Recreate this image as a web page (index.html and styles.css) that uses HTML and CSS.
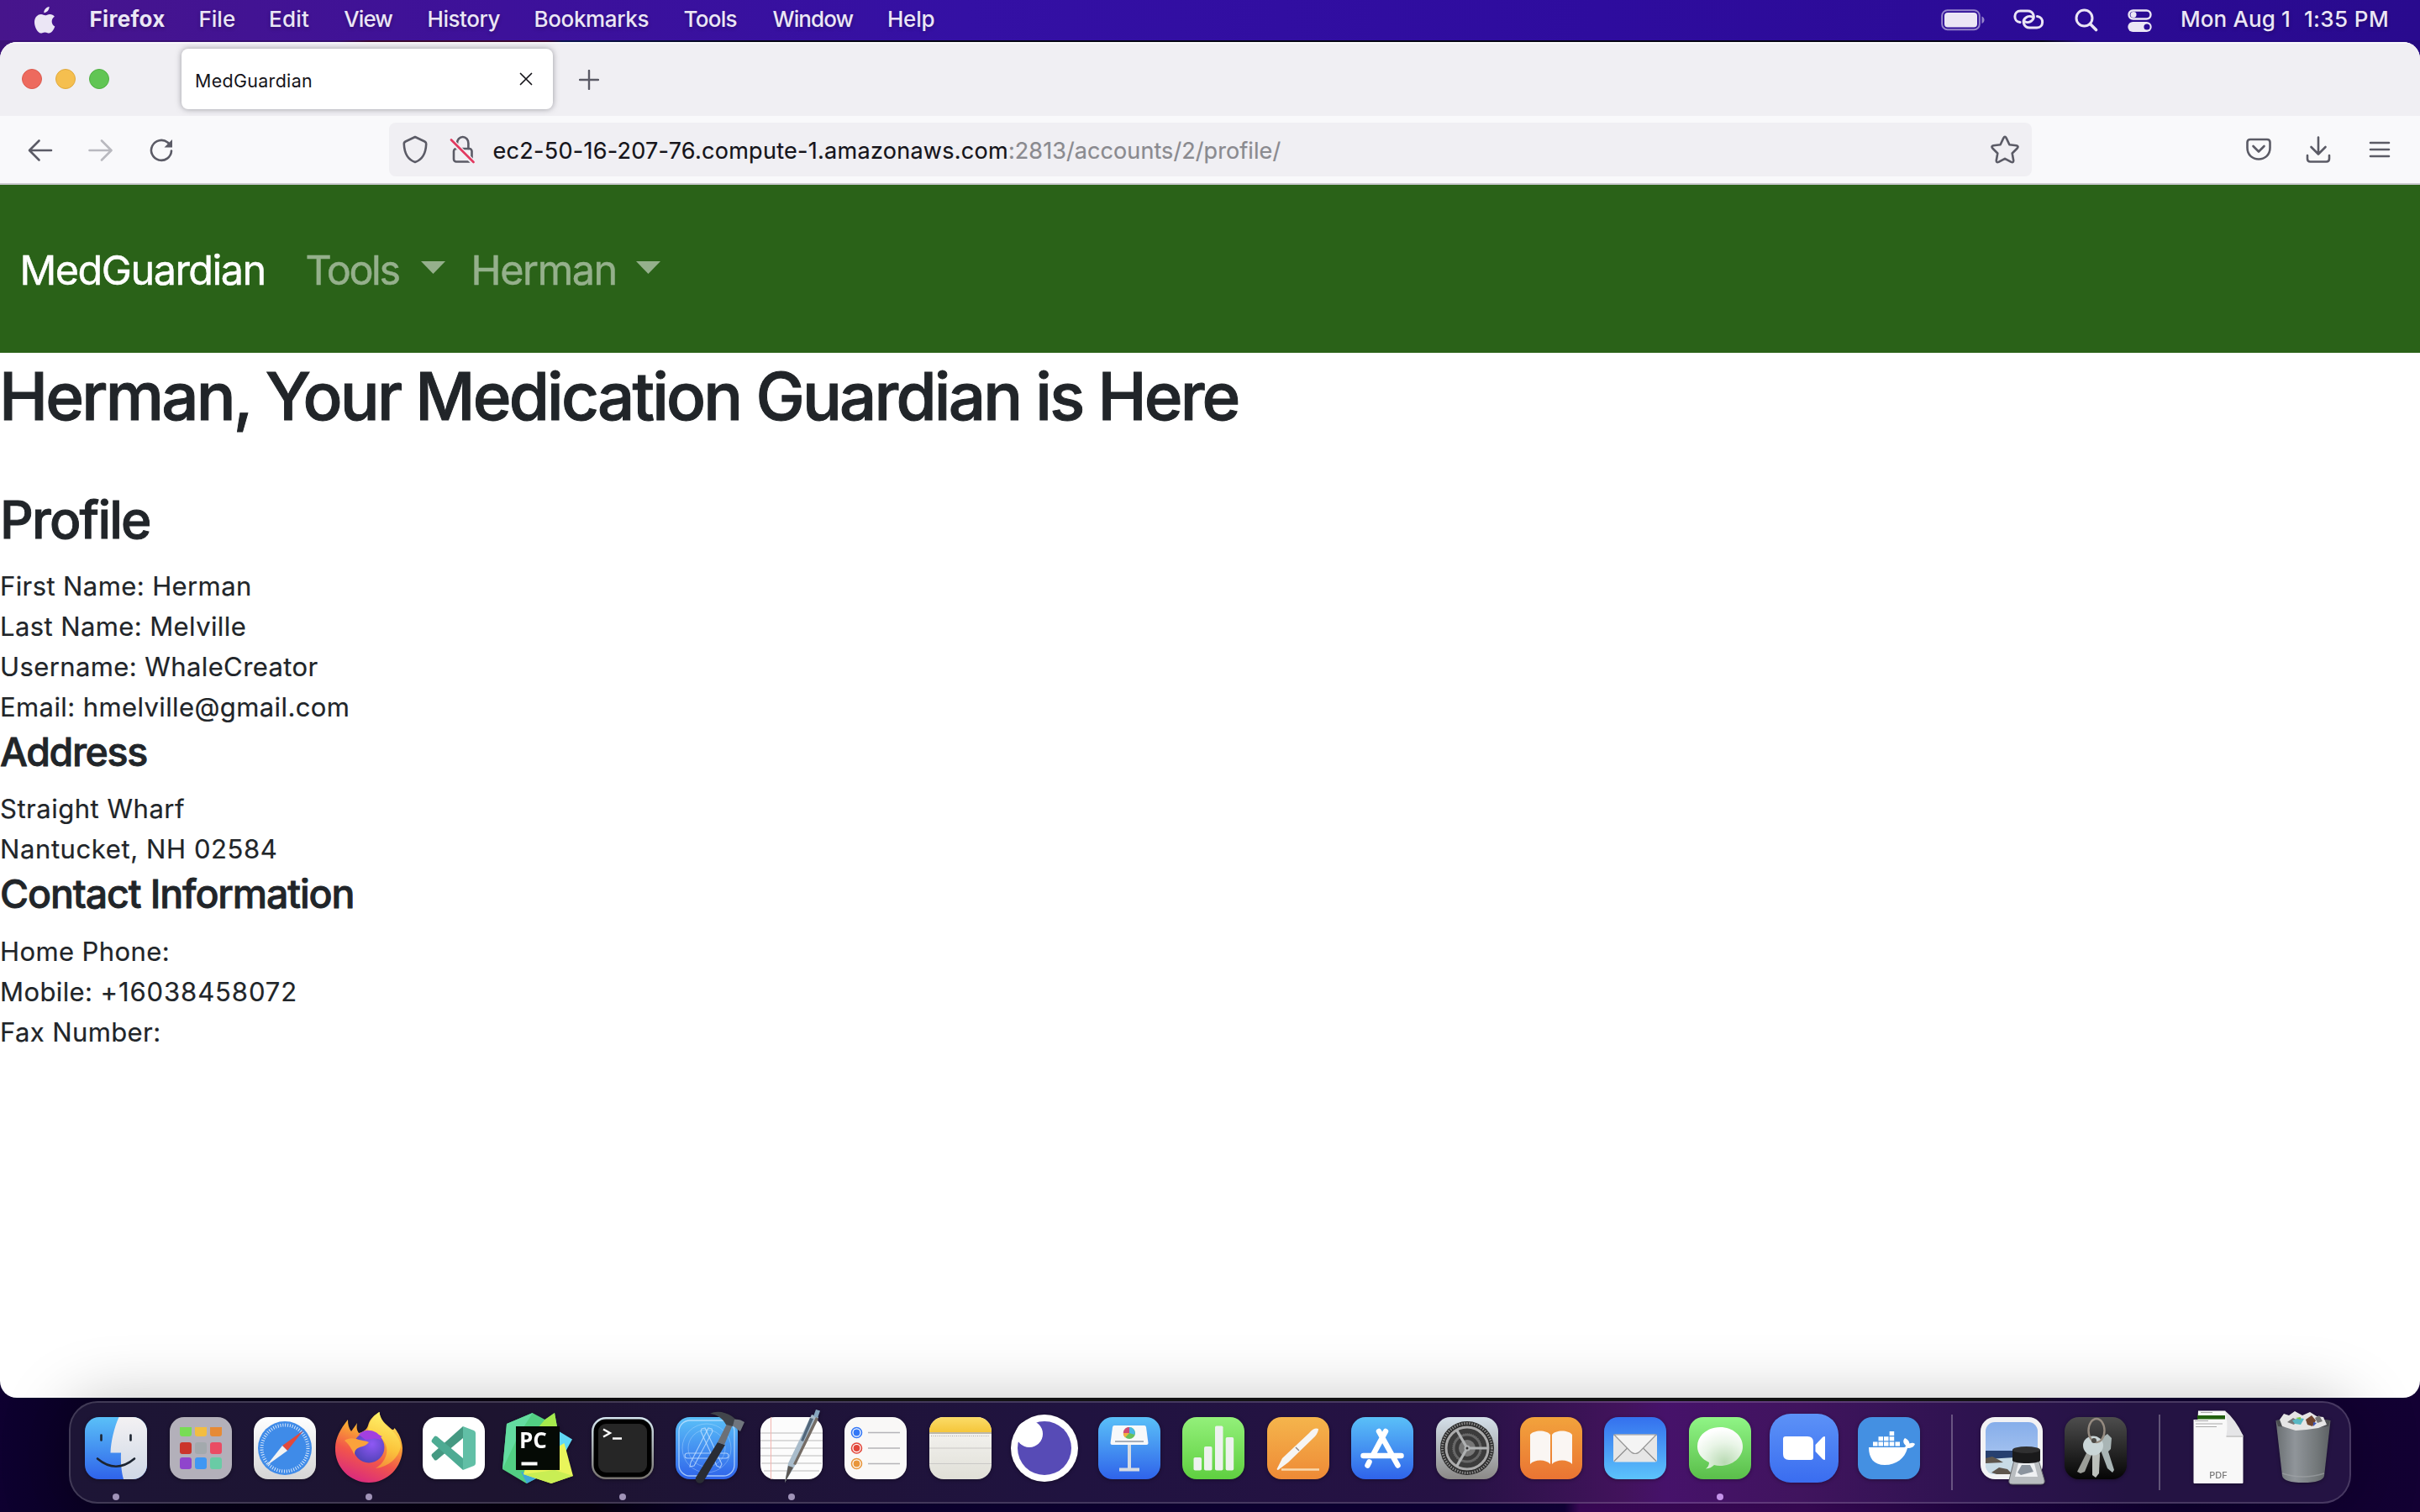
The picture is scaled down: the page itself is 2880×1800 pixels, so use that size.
FILE: index.html
```html
<!DOCTYPE html>
<html lang="en">
<head>
<meta charset="utf-8">
<title>MedGuardian</title>
<link rel="stylesheet" href="styles.css">
</head>
<body>
<div class="desktop">
  <header class="menubar">
    <svg class="apple" viewBox="0 0 26 32"><path d="M18.6 0c.3 3.600-2.900 7.300-6.300 7.200C12 3.800 15.300.3 18.600 0zM25.300 23.600c-1.400 3.900-3.900 7.900-7 8-1.800 0-2.600-1.100-4.800-1.100s-3.100 1.100-4.800 1.100C5.200 31.700 1 24.600 1 18.600c0-6.300 4-9.600 7.900-9.600 2.100 0 3.700 1.300 5 1.300 1.200 0 3.200-1.500 5.700-1.400 2 .1 4 .9 5.300 2.800-4.700 2.900-4 9.500.4 11.900z"/></svg>
    <nav class="menus">
      <span class="app">Firefox</span><span class="m-file">File</span><span class="m-edit">Edit</span><span class="m-view">View</span><span class="m-history">History</span><span class="m-bookmarks">Bookmarks</span><span class="m-tools">Tools</span><span class="m-window">Window</span><span class="m-help">Help</span>
    </nav>
    <div class="status">
      <svg class="battery" viewBox="0 0 52 26"><rect x="1.200" y="1.200" width="44.600" height="23" rx="6.500" fill="none" stroke="#fff" stroke-opacity=".5" stroke-width="2"/><rect x="4" y="4" width="39" height="17.400" rx="4" fill="#ebe6f5"/><path d="M48.500 8.500c4 1.500 4 7 0 8.500z" fill="#fff" fill-opacity=".5"/></svg>
      <svg class="link" viewBox="0 0 37 26" fill="none" stroke="#ebe6f5" stroke-width="3" stroke-linecap="round"><path d="M8 15.500C-.5 14.500 0 2 8.500 2H17c7.500 0 9.500 8.500 4.500 12-2.500 2-6 1.800-8 .5"/><path d="M28.500 8.500C37 9.500 36.500 22 28 22h-8.500c-7.500 0-9.500-8.500-4.500-12 2.500-2 6-1.800 8-.5"/></svg>
      <svg class="search" viewBox="0 0 28 28" fill="none" stroke="#ebe6f5" stroke-width="3" stroke-linecap="round"><circle cx="11.500" cy="11.500" r="9.500"/><path d="M18.500 18.500l7 7" stroke-width="3.600"/></svg>
      <svg class="control" viewBox="0 0 30 28"><rect x="1.500" y="1.500" width="26" height="10" rx="5" fill="none" stroke="#ebe6f5" stroke-width="2.400"/><circle cx="7" cy="6.500" r="3.500" fill="#ebe6f5"/><rect x=".3" y="15" width="28.400" height="12" rx="6" fill="#ebe6f5"/><circle cx="23" cy="21" r="3.600" fill="#2b0a95"/></svg>
      <span class="date">Mon Aug 1</span><span class="time">1:35 PM</span>
    </div>
  </header>

  <main class="window">
    <div class="tabbar">
      <div class="lights"><i class="red"></i><i class="yellow"></i><i class="green"></i></div>
      <div class="tab"><span>MedGuardian</span><svg viewBox="0 0 16 16"><path d="M1.500 1.500l13 13M14.500 1.500l-13 13" stroke="#15141a" stroke-width="1.700" stroke-linecap="round"/></svg></div>
      <svg class="newtab" viewBox="0 0 24 24"><path d="M12 1v22M1 12h22" stroke="#5b5b66" stroke-width="2.400" stroke-linecap="round"/></svg>
    </div>
    <div class="toolbar">
      <div class="nav-buttons">
        <svg viewBox="0 0 30 28"><path d="M28 14H2.500M13.500 2.500L2 14l11.500 11.500"/></svg>
        <svg class="off" viewBox="0 0 30 28"><path d="M1.500 14H27M16 2.500L27.500 14 16 25.500"/></svg>
        <svg class="reload" viewBox="0 0 30 30"><path d="M27 15.500A12 12 0 1 1 22.500 5.500L26 9"/><path d="M28 2v9.500h-9.500z" fill="#5b5b66" stroke="none"/></svg>
      </div>
      <div class="urlbar">
        <svg class="shield" viewBox="0 0 30 34"><path d="M15 2l11.500 5.500c1.500.7 1.800 1.500 1.700 3C27.800 20 24 29 15 32 6 29 2.200 20 1.800 10.500c-.1-1.500.2-2.300 1.700-3z"/></svg>
        <svg class="lock" viewBox="0 0 30 34"><rect x="5" y="16" width="21.500" height="15.500" rx="3"/><path d="M9 11V9.500a6.700 7.500 0 0 1 13.400 0V16"/><path d="M2 6l26 26" stroke="#f1f0f4" stroke-width="6"/><path d="M2 5.500L28.500 32" stroke="#e2395f" stroke-width="2.600"/></svg>
        <p class="url"><span class="host">ec2-50-16-207-76.compute-1.amazonaws.com</span><span class="path">:2813/accounts/2/profile/</span></p>
        <svg class="star" viewBox="0 0 34 34"><path d="M15.300 3.400q1.700-3 3.400 0l3.700 7.800 8.300 1.100q3 .8 1 3.200l-6 6 1.500 8.500q.2 3-2.700 1.900L17 27.800l-7.500 4.100q-2.900 1.100-2.700-1.900l1.500-8.500-6-6q-2-2.400 1-3.200l8.300-1.100z"/></svg>
      </div>
      <div class="tools">
        <svg class="pocket" viewBox="0 0 30 28"><path d="M5 2h20q3.500 0 3.500 3.500V12c0 18-27 18-27 0V5.500Q1.500 2 5 2z"/><path d="M8.500 10l6.500 6.500 6.500-6.500"/></svg>
        <svg class="download" viewBox="0 0 30 32"><path d="M15 1.500v19M6.500 13l8.500 8.500 8.500-8.500M2 23v4q0 3.500 3.500 3.500h19q3.500 0 3.500-3.500v-4"/></svg>
        <svg class="burger" viewBox="0 0 26 22"><path d="M2 3h22M2 11h22M2 19h22"/></svg>
      </div>
    </div>

    <div class="page">
      <nav class="navbar">
        <a class="brand">MedGuardian</a>
        <a class="drop d-tools">Tools</a><svg class="caret" viewBox="0 0 29 15"><path d="M0 0h29L14.500 15z"/></svg>
        <a class="drop d-user">Herman</a><svg class="caret" viewBox="0 0 29 15"><path d="M0 0h29L14.500 15z"/></svg>
      </nav>
      <h1>Herman, Your Medication Guardian is Here</h1>
      <h2>Profile</h2>
      <p>First Name: Herman</p>
      <p>Last Name: Melville</p>
      <p>Username: WhaleCreator</p>
      <p>Email: hmelville@gmail.com</p>
      <h4 class="address">Address</h4>
      <p class="street">Straight Wharf</p>
      <p class="digits">Nantucket, NH 02584</p>
      <h4>Contact Information</h4>
      <p>Home Phone:</p>
      <p>Mobile: <span class="phone">+16038458072</span></p>
      <p>Fax Number:</p>
    </div>
  </main>

  <footer class="dock">
    <svg width="0" height="0" class="defs"><defs>
      <linearGradient id="gBlue" x2="0" y2="1"><stop stop-color="#5ac0f8"/><stop offset="1" stop-color="#2f63ea"/></linearGradient>
      <linearGradient id="gMail" x2="0" y2="1"><stop stop-color="#3470ee"/><stop offset="1" stop-color="#5cc3fb"/></linearGradient>
      <linearGradient id="gGreen" x2="0" y2="1"><stop stop-color="#90f586"/><stop offset="1" stop-color="#5abe4a"/></linearGradient>
      <linearGradient id="gLime" x2="0" y2="1"><stop stop-color="#93f07a"/><stop offset="1" stop-color="#5fcf40"/></linearGradient>
      <linearGradient id="gOrange" x2="0" y2="1"><stop stop-color="#f5b54c"/><stop offset="1" stop-color="#ee8a36"/></linearGradient>
      <linearGradient id="gBooks" x2="0" y2="1"><stop stop-color="#f2a33c"/><stop offset="1" stop-color="#ea7433"/></linearGradient>
      <linearGradient id="gWhite" x2="0" y2="1"><stop stop-color="#fff"/><stop offset="1" stop-color="#d5d5d5"/></linearGradient>
      <linearGradient id="gFace" x2="0" y2="1"><stop stop-color="#f3f1f3"/><stop offset="1" stop-color="#cfd8e6"/></linearGradient>
      <linearGradient id="gSilver" x2="0" y2="1"><stop stop-color="#d5e0ea"/><stop offset="1" stop-color="#8b8987"/></linearGradient>
      <linearGradient id="gTerm" x2="0" y2="1"><stop stop-color="#d6e7f0"/><stop offset="1" stop-color="#77736f"/></linearGradient>
      <linearGradient id="gZoom" x2="0" y2="1"><stop stop-color="#5c92f7"/><stop offset="1" stop-color="#3a6df0"/></linearGradient>
      <linearGradient id="gYellow" x2="0" y2="1"><stop stop-color="#fbdc69"/><stop offset="1" stop-color="#f5c63a"/></linearGradient>
      <linearGradient id="gNote" x2="0" y2="1"><stop stop-color="#f8f7f5"/><stop offset="1" stop-color="#e0dfd7"/></linearGradient>
      <linearGradient id="gFox" x1=".75" y1="0" x2=".35" y2="1"><stop stop-color="#fff36a"/><stop offset=".35" stop-color="#f9a833"/><stop offset=".65" stop-color="#f2564a"/><stop offset="1" stop-color="#d92a7f"/></linearGradient>
      <linearGradient id="gFlame" x1=".5" y1="0" x2=".3" y2="1"><stop stop-color="#fff56c"/><stop offset=".6" stop-color="#fbc43c"/><stop offset="1" stop-color="#f58a3a"/></linearGradient>
      <radialGradient id="gGlobe" cx=".6" cy=".4" r=".7"><stop stop-color="#8f58f5"/><stop offset="1" stop-color="#4a40b0"/></radialGradient>
      <linearGradient id="gBlack" x2="0" y2="1"><stop stop-color="#4d4d4d"/><stop offset="1" stop-color="#050505"/></linearGradient>
      <linearGradient id="gBin"><stop stop-color="#6b7073"/><stop offset=".35" stop-color="#90959a"/><stop offset=".75" stop-color="#73787a"/><stop offset="1" stop-color="#5c6063"/></linearGradient>
      <linearGradient id="gSky" x2="0" y2="1"><stop stop-color="#86aeea"/><stop offset="1" stop-color="#b4cdf2"/></linearGradient>
      <radialGradient id="gBubble" cx=".6" cy=".85" r=".8"><stop stop-color="#b9dab3"/><stop offset=".6" stop-color="#e9f5e7"/><stop offset="1" stop-color="#fff"/></radialGradient>
      <clipPath id="sq"><rect x="-37" y="-37" width="74" height="74" rx="17"/></clipPath>
    </defs></svg>

    <div class="slot running"><svg viewBox="-50 -56 100 122"><g clip-path="url(#sq)"><path d="M-37-37h74v74h-74z" fill="url(#gBlue)"/><path d="M3.500-37C-2-25-6-8-6.500 5.500H6C5.500 18 6.500 28 9 37h28v-74z" fill="url(#gFace)"/></g><path d="M-17.500-15.500v6M17.500-15.500v6M-22 12.500Q0 31 22 12.500" fill="none" stroke="#1c2430" stroke-width="2.600" stroke-linecap="round"/></svg></div>
    <div class="slot"><svg viewBox="-50 -56 100 122"><rect x="-37" y="-37" width="74" height="74" rx="17" fill="#b3b0ba"/><rect x="-25" y="-30" width="14" height="16" rx="3" fill="#78dc55"/><rect x="-7" y="-30" width="14" height="16" rx="3" fill="#f2bd41"/><rect x="11" y="-30" width="14" height="16" rx="3" fill="#e68a35" /><rect x="-25" y="-7" width="14" height="14" rx="3" fill="#cb342a"/><rect x="-7" y="-7" width="14" height="14" rx="3" fill="#a3a9ad"/><rect x="11" y="-7" width="14" height="14" rx="3" fill="#ea4c64"/><rect x="-25" y="11" width="14" height="14" rx="3" fill="#8f45cc"/><rect x="-7" y="11" width="14" height="14" rx="3" fill="#3f97f3"/><rect x="11" y="11" width="14" height="14" rx="3" fill="#69cba5"/><path d="M-26-31h52v6h-52z" fill="#b3b0ba"/><path d="M-26-14h52v3h-52z" fill="none"/></svg></div>
    <div class="slot"><svg viewBox="-50 -56 100 122"><rect x="-37" y="-37" width="74" height="74" rx="17" fill="url(#gWhite)"/><circle r="32" fill="#3f8be8"/><circle r="27.500" fill="none" stroke="#fff" stroke-opacity=".8" stroke-width="4" stroke-dasharray="1 1.880"/><path d="M22-21L3 3-3-3z" fill="#e2493c"/><path d="M-22 21L-3-3 3 3z" fill="#f3f3f3"/></svg></div>
    <div class="slot running"><svg viewBox="-50 -56 100 122"><path d="M-25-34C-25-28-24-24-21-20c2-3 4-5 7-10-1 6 0 9 2 12C-4-20-2-24-1-27c2-8 8-13 13.500-16 1 9 7 14 14 20 1 1 3 2 4-1 5 6 9 14 9.500 24C40 23 22 41 0 41S-41 23-40-1c.3-11 6-22 15-33z" fill="url(#gFox)"/><path d="M12.500-43C8-40-2-32-1-17c10-2 20 6 22 16 2 9-4 20-13 25 16-2 27-12 30-26-1-11-9-18-14-22C18-29 13-35 12.500-43z" fill="url(#gFlame)"/><circle cy="-1" r="18.500" fill="url(#gGlobe)"/><path d="M-12-16C-8-21 0-23 8-19c3 1.500 4 4 8 5-3 1-3 2 0 5-5-2-8-3-12-2l-8 1z" fill="#a33fe0"/><path d="M-29-9c5-4 12-3 17-1 4 1 8 1 12 3-3 4-8 5-11 6-5 2-6 4-6 9-4-8-7-13-12-17z" fill="#fba23b"/></svg></div>
    <div class="slot"><svg viewBox="-50 -56 100 122"><rect x="-37" y="-37" width="74" height="74" rx="17" fill="#fff"/><path d="M11-26v14L-20 14q-2 1-3 0l-3-4q-1-2 0-3z" fill="#459982"/><path d="M11 26V12L-20-14q-2-1-3 0l-3 4q-1 2 0 3z" fill="#4dab93"/><path d="M11-26l13 5q2 1 2 3v36q0 2-2 3l-13 5z" fill="#61bfa6"/></svg></div>
    <div class="slot"><svg viewBox="-50 -56 100 122"><path d="M-37-29L-6.500-42 8.500-34 20-42l4 22L10 30-13.500 42-42 25z" fill="#52cf83"/><path d="M-37-29l31-13-16 25-20 42z" fill="#63dca0"/><path d="M8.500-34L20-42l4 22-24-4z" fill="#a6ea4c"/><path d="M22-22l19 11.500L32 6 20 10z" fill="#60d8f5"/><path d="M-20 28l7 14 15-8z" fill="#3fa8d8"/><path d="M31.500-6L42 33 16 42-17 31l3-10z" fill="#e9f55b"/><path d="M20 26l22 7-26 9-33-11z" fill="#c9ee54"/><path d="M-26-26h52v52h-52z" fill="#050a05"/><text x="-22" y="0" class="pc">PC</text><path d="M-19.500 16.500h19v4h-19z" fill="#fff"/></svg></div>
    <div class="slot running"><svg viewBox="-50 -56 100 122"><rect x="-37" y="-37" width="74" height="74" rx="17" fill="url(#gTerm)"/><rect x="-34.500" y="-34.500" width="69" height="69" rx="14.500" fill="#000"/><rect x="-29" y="-29" width="58" height="58" rx="9" fill="#262626"/><path d="M-23-22.500l8 4.500-8 4.500M-12-11.500H-1" fill="none" stroke="#fff" stroke-width="2.400"/></svg></div>
    <div class="slot"><svg viewBox="-50 -56 100 122"><rect x="-37" y="-37" width="74" height="74" rx="17" fill="url(#gBlue)"/><g fill="none" stroke="#c9e4ff" stroke-opacity=".75"><rect x="-33" y="-33" width="66" height="66" rx="13" stroke-width="1.300"/><circle r="29" stroke-opacity=".35"/><circle r="22" stroke-opacity=".35"/><g stroke-width="1.100"><path d="M-6-23l4-1 20 43-2 4-4-2L-7-20z"/><path d="M6-23l-4-1-21 41-1 5 5-1L7-20z"/><rect x="-26" y="6" width="52" height="6" rx="3"/></g></g><path d="M13-7l9 3L-4 40q-3 3-7 1-3-2-2-6z" fill="#292c34"/><path d="M25-31l6 3L21-4l-8-3z" fill="#6c7076"/><path d="M4-41c8-4 18-2 26 3l5 4-4 8-8-2C19-36 12-40 4-41z" fill="#41454b"/><path d="M33-34c3-1 8 0 12 3l-5 11c-4-2-6-6-9-6z" fill="#70757d"/></svg></div>
    <div class="slot running"><svg viewBox="-50 -56 100 122"><rect x="-37" y="-37" width="74" height="74" rx="17" fill="#fcfcfc"/><path d="M-37-18h74M-37-9h74M-37 0h74M-37 9h74M-36 18h72M-33 27h66" stroke="#b9b9b9" stroke-width="1.200"/><path d="M-24.500-37v74" stroke="#f3b5b0"/><path d="M24-40l8 3L4 21l-12 20 4-23z" fill="#a9bccb"/><path d="M29-46l5 1.500L31-36l-5-2z" fill="#86a5be"/><path d="M22-36l4 1L14-8l-3-1z" fill="#52677b"/><path d="M32-35L5 20l-3-1L29-37z" fill="#746c65"/><path d="M-4 21l6 2-10 18z" fill="#5c5854"/></svg></div>
    <div class="slot"><svg viewBox="-50 -56 100 122"><rect x="-37" y="-37" width="74" height="74" rx="17" fill="#f9f8f7"/><g fill="#fff" stroke-width="1.600"><circle cx="-22.500" cy="-18.500" r="6" stroke="#3478f6"/><circle cx="-22.500" r="6" stroke="#e2463a"/><circle cx="-22.500" cy="18.500" r="6" stroke="#e8953a"/></g><circle cx="-22.500" cy="-18.500" r="3.900" fill="#3478f6"/><circle cx="-22.500" r="3.900" fill="#e2463a"/><circle cx="-22.500" cy="18.500" r="3.900" fill="#e8953a"/><path d="M-9-18.500h38M-9 0h38M-9 18.500h38" stroke="#b5b4b8" stroke-width="1.400"/></svg></div>
    <div class="slot"><svg viewBox="-50 -56 100 122"><g clip-path="url(#sq)"><path d="M-37-37h74v74h-74z" fill="url(#gNote)"/><path d="M-37-37h74v18h-74z" fill="url(#gYellow)"/><path d="M-37-18h74" stroke="#aaa391" stroke-width="1.600"/><path d="M-35-14.500h70" stroke="#aaa9a5" stroke-width="1" stroke-dasharray="1 1.500"/><path d="M-37 0h74M-37 18.500h74" stroke="#c9c8c6" stroke-width="1.200"/></g></svg></div>
    <div class="slot"><svg viewBox="-50 -56 100 122"><circle r="40" fill="#fff"/><circle r="32" fill="#574bb6"/><circle cx="-18" cy="-17" r="16" fill="#fff"/></svg></div>
    <div class="slot"><svg viewBox="-50 -56 100 122"><rect x="-37" y="-37" width="74" height="74" rx="17" fill="url(#gBlue)"/><path d="M-2-5h4v29h-4zM-12 23.500h24v4h-24z" fill="#d5dae2"/><path d="M-18-27h36q1.500 0 2 2l2.500 19q0 2-2 2h-41q-2 0-2-2l2.500-19q.5-2 2-2z" fill="#f7f8fa"/><path d="M-17-8h34" stroke="#a8afb9" stroke-width="2"/><circle cy="-18" r="7" fill="#66c05c"/><path d="M0-18v-7a7 7 0 0 1 6.500 9z" fill="#49b8e8"/><path d="M0-18l-6.500 3A7 7 0 0 1 0-25z" fill="#d04a76"/><path d="M0-18l-5 5.500A7 7 0 0 1-7-18z" fill="#f3b03f"/></svg></div>
    <div class="slot"><svg viewBox="-50 -56 100 122"><rect x="-37" y="-37" width="74" height="74" rx="17" fill="url(#gLime)"/><g fill="#edf2ee"><rect x="-23.500" y="11" width="9.500" height="15.500" rx="1.800"/><rect x="-11" y="-2" width="9.500" height="28.500" rx="1.800"/><rect x="2" y="-26.500" width="9.500" height="53" rx="1.800"/><rect x="14.700" y="-13" width="9.500" height="39.500" rx="1.800"/></g></svg></div>
    <div class="slot"><svg viewBox="-50 -56 100 122"><rect x="-37" y="-37" width="74" height="74" rx="17" fill="url(#gOrange)"/><path d="M-20 25.500h45" stroke="#f9d9ae" stroke-width="2.400"/><path d="M24-23q0 4-4 9L-12 17l-12 9q-2 0-1-2l6-12L13-18q6-7 11-5z" fill="#f6f5f3"/><path d="M-3-1l4 4" stroke="#8f8781" stroke-width="1.500"/></svg></div>
    <div class="slot"><svg viewBox="-50 -56 100 122"><rect x="-37" y="-37" width="74" height="74" rx="17" fill="url(#gBlue)"/><g stroke="#fff" stroke-linecap="round" stroke-width="6.500"><path d="M-22.500 9H22.500M-15.500 16.500l-2 4M4-20L-11 8M-4-20L18.500 20.500"/></g></svg></div>
    <div class="slot"><svg viewBox="-50 -56 100 122"><rect x="-37" y="-37" width="74" height="74" rx="17" fill="url(#gSilver)"/><circle r="32" fill="#2b2b2b"/><circle r="29.500" fill="none" stroke="#8b8b8b" stroke-width="3" stroke-dasharray="1.500 1.500"/><circle r="25" fill="#3c3c3c" stroke="#aaa" stroke-width="3"/><circle r="18" fill="#676767" stroke="#3a3a3a" stroke-width="1.500" stroke-dasharray="1.500 1"/><circle r="14.500" fill="#3a3a3a"/><circle r="10" fill="#777"/><path d="M0 0h25M0 0l-12.500-21.700M0 0l-12.500 21.700" stroke="#b0b2b3" stroke-width="3.200"/><circle r="3.500" fill="#b0b2b3"/><circle r="1.500" fill="#333"/></svg></div>
    <div class="slot"><svg viewBox="-50 -56 100 122"><rect x="-37" y="-37" width="74" height="74" rx="17" fill="url(#gBooks)"/><path d="M-25-16c4-6 20-6 24 0v35c-5-6-19-6-24 0zM1-16c4-6 20-6 24 0v35c-5-6-19-6-24 0z" fill="#faf6f3"/></svg></div>
    <div class="slot"><svg viewBox="-50 -56 100 122"><rect x="-37" y="-37" width="74" height="74" rx="17" fill="url(#gMail)"/><rect x="-26" y="-16.500" width="52" height="33" rx="2.500" fill="#e6e6e6"/><path d="M-25 15.500L-9.500 0M25 15.500L9.500 0" stroke="#8f8f8f" stroke-width="1.200"/><path d="M-25-16L-7 2.500q7 8 14 0L25-16z" fill="#f4f4f4" stroke="#999" stroke-width="1.200"/></svg></div>
    <div class="slot running bright"><svg viewBox="-50 -56 100 122"><rect x="-37" y="-37" width="74" height="74" rx="17" fill="url(#gGreen)"/><path d="M0-25C15-25 27-15 27-2S15 21 0 21q-4 0-7-1-4 4-10 4.500 4-3 4-7.500C-22 13-27 6-27-2-27-15-15-25 0-25z" fill="url(#gBubble)"/></svg></div>
    <div class="slot"><svg viewBox="-50 -56 100 122"><rect x="-41" y="-41" width="82" height="82" rx="25" fill="url(#gZoom)"/><path d="M-22-14H4q7 0 7 7v18q0 3-3 3h-26q-7 0-7-7v-18q0-3 3-3zM13.500-4L22-13q3-2 3 0v26q0 2-3 0l-8.500-9z" fill="#fff"/></svg></div>
    <div class="slot"><svg viewBox="-50 -56 100 122"><rect x="-37" y="-37" width="74" height="74" rx="17" fill="#4490e2"/><path d="M-24-1h41q3 0 3-2c-4-4-3-7-1-9 4 2 5 4 5.500 6.500 2-1 5-1 6.500.5-1 3-4 5-9 5C19 12 9 20-5 20-18 20-24 12-24-1z" fill="#fff"/><path d="M-19-7.500h5.500v5h-5.500zM-12.500-7.500H-7v5h-5.500zM-6-7.500H-.5v5H-6zM.7-7.500h5.500v5H.7zM7.500-7.500H13v5H7.500zM-12.500-13.700H-7v5h-5.500zM-6-13.700H-.5v5H-6zM.7-13.700h5.500v5H.7zM.7-20h5.500v5H.7z" fill="#fff"/></svg></div>
    <div class="divider"></div>
    <div class="slot"><svg viewBox="-50 -56 100 122"><rect x="-37" y="-37" width="74" height="74" rx="17" fill="#f2f2f4"/><rect x="-31" y="-31" width="62" height="62" rx="11" fill="url(#gSky)"/><path d="M-31 3h62v10h-62z" fill="#27406f"/><path d="M-31 12c15 2 30-3 62 0v9q-1 10-11 10h-40q-10 0-11-10z" fill="#c8dbe6"/><path d="M-31 12l8-2 8 4 5 3-21 1zM-24 29l9-6 10 2 6 6h-19z" fill="#5e564d"/><path d="M3 14h29l7 24q1 5-4 5H1q-5 0-4-5z" fill="#b9bdc0" stroke="#6b6e73"/><path d="M8 18h19l4 16H4z" fill="#eef0f2"/><path d="M12 20h10l4 8-15 4-4-3z" fill="#8b949e"/><path d="M1 2v13c3 4 30 4 33 0V2z" fill="#1a1a1b"/><ellipse cx="17.500" cy="2" rx="16.500" ry="4" fill="#303031"/></svg></div>
    <div class="slot"><svg viewBox="-50 -56 100 122"><rect x="-37" y="-37" width="74" height="74" rx="17" fill="url(#gBlack)"/><path d="M7-12l7-5 5 5-1 13-3 3 7 22-2 3-6-5L5 0z" fill="#a9b5b5"/><path d="M-10 4l6 2-9 22-5 2-4-2z" fill="#9b9d98"/><path d="M-4 2h8l1 6-1 22-4 5-4-3z" fill="#bcc0bb"/><ellipse cx="-3" cy="-3" rx="12" ry="11.500" fill="#cad6d7"/><ellipse cx="1" cy="-21" rx="9.500" ry="14" fill="none" stroke="#958b80" stroke-width="2.400"/><circle cx="-2" cy="-9" r="3" fill="#4d4b47"/></svg></div>
    <div class="divider"></div>
    <div class="slot"><svg viewBox="-50 -56 100 122"><path d="M-24-44.500H8L29.500-15v56q0 1-1 1h-57q-1 0-1-1V-34h5z" fill="#f8f8f8"/><path d="M-25-39H8v4.500h-33z" fill="#22600f"/><path d="M-21-42.500H-7M-28-32.500H-12M-27-29H5M-27-25.500H-2" stroke="#aaa" stroke-width="1"/><path d="M8-44.500Q12-30 9.500-14.500L29.500-15Q20-35 8-44.500z" fill="#e5e5e7"/><path d="M9.500-14h20" stroke="#bbb" stroke-width="1.400"/><text x="0" y="35.500" class="pdf">PDF</text></svg></div>
    <div class="slot"><svg viewBox="-50 -56 100 122"><path d="M-32.500-33q32-6 65 0l-7.500 66q-2 8-25 8t-25-8z" fill="url(#gBin)"/><path d="M-32-33q32-4 64 0l-2 7q-30 4-60 0z" fill="#4b4d50"/><path d="M-28-34l5-7 6 2 7-5 9 5 9-4 8 5 8 1 4 9-10 4-14 2-13 1-16-5z" fill="#e5e5e5"/><path d="M-19-31l7-5 5 3-4 5zM14-36l5-3 4 7-6 2z" fill="#777"/><path d="M-13-33l8-3 6 1-4 7-7-1z" fill="#58b8c4"/><path d="M3-34l7-5 5 6-4 7-6-2z" fill="#70442e"/><path d="M-9-36l6-1v3z" fill="#7ccb3e"/><path d="M12-31l4 1-4 4z" fill="#3a55b8"/><path d="M-25 30q25 8 50 0" fill="none" stroke="#a3a7aa" stroke-opacity=".6" stroke-width="1.500"/></svg></div>
  </footer>
</div>
</body>
</html>
```
FILE: styles.css
```css
* { box-sizing: border-box; margin: 0; padding: 0; }
body { font-family: Inter, "Liberation Sans", sans-serif; width: 2880px; height: 1800px; overflow: hidden; }
svg { display: block; flex: none; }

.desktop {
  width: 2880px; height: 1800px; display: flex; flex-direction: column; align-items: center;
  background:
    linear-gradient(90deg, #3c1278 0, #351070 400px, #3a0830 440px, #3a0830 650px, #0a1450 670px, #050514 900px, #050514 2430px, #240a80 2480px) 0 0 / 100% 100px no-repeat,
    linear-gradient(90deg, transparent 540px, #0b0a0d 640px, #151516 900px, #151516 2400px, transparent 2460px) 0 1600px / 100% 68px no-repeat,
    linear-gradient(90deg, #0e0030 0, #06001a 200px, #07000f 700px, #0b0030 850px, #10003a 1780px, #12003c 1862px, #400960 1880px, #3d0a5c 2150px, #1d0342 2400px, #0f0030 2600px, #130033 2880px);
}

.menubar {
  width: 100%; height: 48px; flex: none; display: flex; align-items: center;
  padding-left: 40px; color: #ebe6f5; font-size: 26px; font-weight: 500; line-height: 48px;
  background: linear-gradient(90deg, #47158c 0, #3d119a 600px, #3410a4 1150px, #2e0c9e 1900px, #290a8e 2880px);
}
.menubar span { white-space: nowrap; text-shadow: 0 2px 4px rgba(0, 0, 0, .25); }
.apple { width: 26px; height: 32px; fill: #ebe6f5; margin-right: 40.5px; }
.menus { display: grid; grid-template-columns: 130px 83.5px 89.3px 99.2px 127px 178px 106px 136.5px 80px; padding-bottom: 2px; }
.app { font-weight: 700; letter-spacing: .3px; }
.m-edit { letter-spacing: .2px; }
.m-view, .m-window { letter-spacing: -.92px; }
.m-history { letter-spacing: -.45px; }
.m-bookmarks { letter-spacing: -.36px; }
.m-tools { letter-spacing: -.72px; }
.m-help { letter-spacing: -.23px; }
.status { flex: 1; display: flex; align-items: center; justify-content: flex-end; padding-right: 37px; }
.battery { width: 52px; height: 26px; }
.link { width: 37px; height: 26px; margin-left: 34px; }
.search { width: 28px; height: 28px; margin-left: 36px; }
.control { width: 30px; height: 28px; margin: 2px 0 0 35px; }
.date { margin-left: 33px; letter-spacing: .11px; padding-bottom: 2px; }
.time { margin-left: 16px; letter-spacing: .39px; padding-bottom: 2px; }

.window {
  width: 100%; height: 1614px; margin-top: 2px; flex: none; overflow: hidden;
  border-radius: 20px; background: #fff; display: flex; flex-direction: column;
}
.tabbar { height: 88px; flex: none; background: #f0eff3; box-shadow: inset 0 2px 0 #f9f9fb; display: flex; align-items: center; padding-left: 26px; }
.lights { display: flex; gap: 16px; width: 190px; }
.lights i { width: 24px; height: 24px; border-radius: 50%; }
.red { background: #ed6a5e; border: 1px solid #dc5a4e; }
.yellow { background: #f5bf4f; border: 1px solid #dfa93d; }
.green { background: #61c554; border: 1px solid #50b043; }
.tab {
  width: 442px; height: 72px; border-radius: 8px; background: #fff; box-shadow: 0 0 7px rgba(80, 80, 90, .55);
  display: flex; align-items: center; justify-content: space-between; padding: 3px 24px 0 16px;
  font-size: 21.4px; letter-spacing: .35px; color: #15141a;
}
.tab svg { width: 16px; height: 16px; margin-top: -3px; }
.newtab { width: 24px; height: 24px; margin: 2px 0 0 31px; }
.toolbar { height: 82px; flex: none; background: #f9f9fb; border-bottom: 2px solid #cbcacf; display: flex; align-items: center; }
.toolbar svg { fill: none; stroke: #5b5b66; stroke-width: 2.6; stroke-linecap: round; stroke-linejoin: round; }
.nav-buttons { width: 463px; padding: 2px 0 0 33px; display: flex; align-items: center; gap: 42px; }
.nav-buttons svg { width: 30px; height: 28px; }
.nav-buttons .reload { height: 30px; }
.nav-buttons .off { opacity: .4; }
.urlbar { width: 1955px; height: 64px; flex: none; border-radius: 8px; background: #f0eff3; display: flex; align-items: center; padding: 0 15px 0 16px; }
.shield { width: 30px; height: 34px; }
.lock { width: 30px; height: 34px; margin-left: 26px; }
.star { width: 34px; height: 34px; }
.url { flex: 1; padding-left: 21.5px; font-size: 27px; line-height: 64px; display: flex; padding-top: 3px; white-space: nowrap; }
.host { color: #15141a; letter-spacing: .283px; -webkit-text-stroke: .2px; }
.path { color: #8a8a8f; letter-spacing: .085px; -webkit-text-stroke: .2px; }
.tools { display: flex; align-items: center; padding-left: 255px; }
.pocket { width: 30px; height: 28px; }
.download { width: 30px; height: 32px; margin-left: 41px; }
.burger { width: 26px; height: 22px; margin-left: 45px; }

.page { flex: 1; color: #212529; }
.navbar { height: 200px; background: #2a6218; display: flex; align-items: center; padding-left: 23.5px; font-size: 48.5px; line-height: 72px; margin-bottom: 4px; -webkit-text-stroke: .5px; }
.brand { width: 340px; color: #fff; letter-spacing: -1.5px; padding-top: 4px; }
.drop { color: #95b08c; padding-top: 4px; }
.d-tools { width: 138px; letter-spacing: -2.36px; }
.d-user { width: 197px; letter-spacing: -1.4px; }
.caret { width: 29px; height: 15px; fill: #95b08c; margin: 0 31px 3px -1px; }
h1, h2, h4 { font-weight: 500; line-height: 1.2; white-space: nowrap; }
h1 { font-size: 78px; line-height: 96px; letter-spacing: -2.8px; margin: 0 0 61px -1px; -webkit-text-stroke: 1px; }
h2 { font-size: 62px; line-height: 76.8px; letter-spacing: -1.83px; margin-bottom: 16px; -webkit-text-stroke: .9px; }
h4 { font-size: 46.5px; line-height: 57.6px; letter-spacing: -1.12px; padding-top: 1px; margin-bottom: 15.4px; -webkit-text-stroke: .8px; }
.page p { font-size: 31px; line-height: 48px; letter-spacing: .4px; -webkit-text-stroke: .2px; }
.page .address { letter-spacing: -1.4px; margin-bottom: 14.6px; }
.page .street { letter-spacing: .52px; }
.page .digits { letter-spacing: .6px; }
.page .phone { letter-spacing: .9px; }

.dock {
  width: 2716px; height: 122px; margin-top: 4px; flex: none; position: relative; z-index: 1;
  border-radius: 34px; display: flex; align-items: center; padding-left: 5.8px;
  background: linear-gradient(90deg, #1d1536 0, #1d1430 500px, #201340 1200px, #261244 1650px, #42135c 1850px, #46126a 1900px, #40145e 2060px, #2e1350 2260px, #241343 2450px, #241343 2716px);
  box-shadow: inset 0 0 0 2px rgba(255, 255, 255, .16), 0 4px 80px rgba(0, 0, 0, .27);
}
.defs { position: absolute; }
.slot { width: 100.476px; flex: none; position: relative; display: flex; justify-content: center; }
.slot svg { width: 100px; height: 122px; filter: drop-shadow(0 1px 2px rgba(0, 0, 0, .35)); }
.running::after { content: ""; position: absolute; left: 46px; top: 110px; width: 8px; height: 8px; border-radius: 50%; background: #a093b8; }
.bright::after { background: #c493ea; }
.divider { width: 2px; height: 90px; flex: none; background: rgba(255, 255, 255, .28); margin: 0 19.6px 0 24px; }
.pc { font: 700 26px "Open Sans", sans-serif; fill: #fff; letter-spacing: 0; }
.pdf { font: 500 11px Inter, sans-serif; fill: #777; text-anchor: middle; }
```
